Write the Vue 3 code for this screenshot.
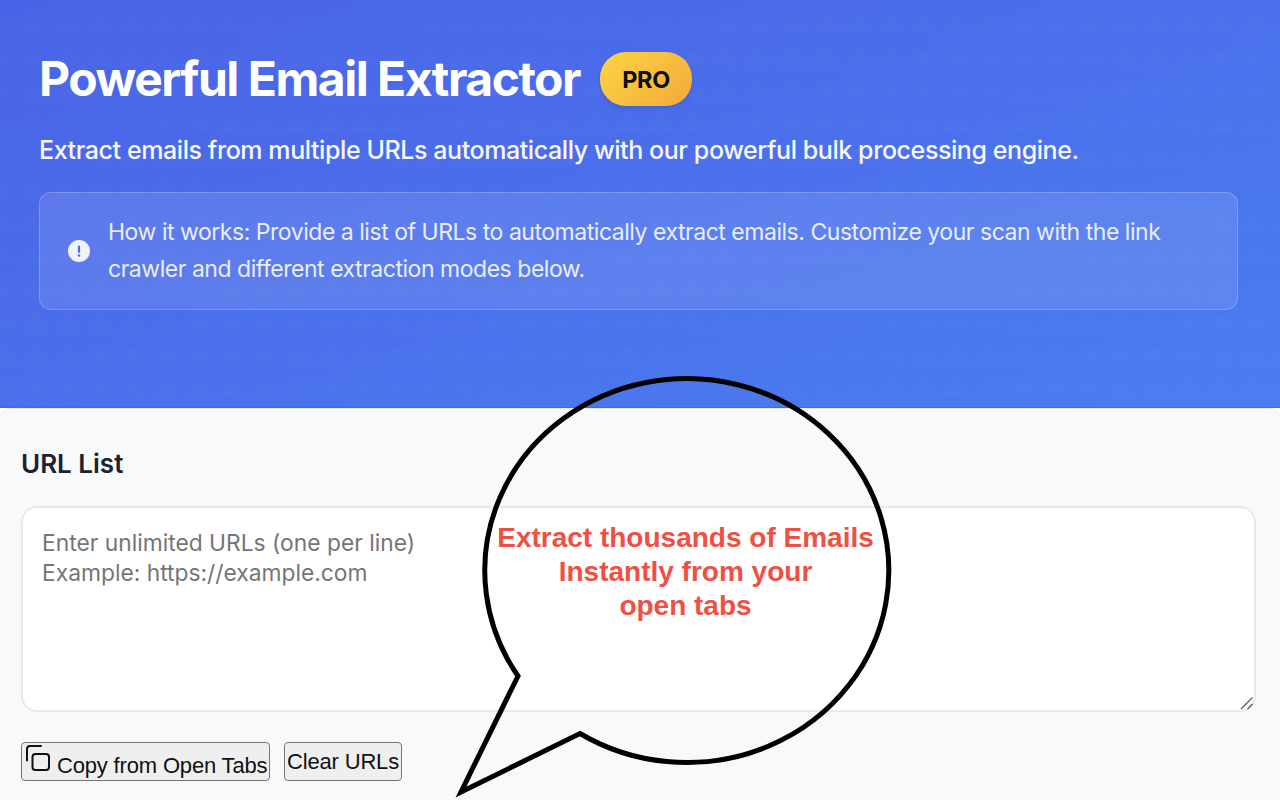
<script setup>
const title = 'Powerful Email Extractor'
const subtitle = 'Extract emails from multiple URLs automatically with our powerful bulk processing engine.'
const info = 'How it works: Provide a list of URLs to automatically extract emails. Customize your scan with the link crawler and different extraction modes below.'
const placeholder = 'Enter unlimited URLs (one per line)\nExample: https://example.com'
</script>

<template>
  <div class="page">
    <header class="hero">
      <div class="title-row">
        <h1>{{ title }}</h1>
        <span class="badge">PRO</span>
      </div>
      <p class="subtitle">{{ subtitle }}</p>
      <div class="info">
        <svg class="info-icon" viewBox="0 0 24 24" width="22" height="22">
          <circle cx="12" cy="12" r="12" fill="#f1f4fe" />
          <rect x="10.800" y="6" width="2.400" height="8" rx="1" fill="#4f6ce6" />
          <circle cx="12" cy="17" r="1.400" fill="#4f6ce6" />
        </svg>
        <p>{{ info }}</p>
      </div>
    </header>
    <main class="panel">
      <h2>URL List</h2>
      <div class="field">
        <textarea class="urls" :placeholder="placeholder"></textarea>
        <svg class="grip" viewBox="0 0 14 14" width="14" height="14" fill="none" stroke="#555" stroke-width="1.100">
          <path d="M1 13 12.500 1.500M7.500 13 12.500 8" />
        </svg>
      </div>
      <div class="actions">
        <button class="copy" type="button">
          <svg viewBox="0 0 26 26" width="26" height="26" fill="none" stroke="#111" stroke-width="2" stroke-linecap="round" stroke-linejoin="round">
            <rect x="7.500" y="9" width="16.500" height="16" rx="3" />
            <path d="M2 15.500V4a3 3 0 0 1 3-3h11" />
          </svg>
          <span>Copy from Open Tabs</span>
        </button>
        <button class="clear" type="button">Clear URLs</button>
      </div>
    </main>
    <div class="callout">
      <svg viewBox="0 0 1280 800" width="1280" height="800" fill="none">
        <path d="M518 676 A202 192 0 1 1 580 733.500 L461 792 Z" stroke="#000" stroke-width="5" stroke-linejoin="miter" stroke-miterlimit="10" />
      </svg>
      <p class="callout-text">Extract thousands of Emails<br />Instantly from your<br />open tabs</p>
    </div>
  </div>
</template>

<style>
html, body { margin: 0; background: #fff; }
</style>

<style scoped>
.page {
  position: relative;
  width: 1280px;
  height: 800px;
  overflow: hidden;
  background: #fff;
  font-family: Inter, "Liberation Sans", sans-serif;
}
.hero {
  box-sizing: border-box;
  height: 408px;
  padding: 52px 42px 0 39px;
  color: #fff;
  background-color: #4a6fec;
  background-image:
    linear-gradient(45deg, rgba(255,255,255,.012) 25%, transparent 25%),
    linear-gradient(315deg, rgba(255,255,255,.012) 25%, transparent 25%),
    linear-gradient(160deg, #4a63e6 0%, #4a7df0 100%);
  background-size: 33px 33px, 33px 33px, 100% 100%;
  border-bottom: 1px solid #3a6bf2;
}
.title-row {
  display: flex;
  align-items: center;
  gap: 20px;
  height: 54px;
}
h1 {
  margin: 0;
  font-size: 48px;
  line-height: 54px;
  font-weight: 700;
  letter-spacing: -1.480px;
}
.badge {
  box-sizing: border-box;
  width: 92px;
  height: 54px;
  border-radius: 26px;
  display: flex;
  align-items: center;
  justify-content: center;
  background: linear-gradient(135deg, #fbd544, #f4a93a);
  box-shadow: 0 2px 5px rgba(0,0,0,.12);
  color: #0d0d0d;
  font-size: 23.400px;
  font-weight: 700;
  letter-spacing: -0.2px;
}
.subtitle {
  margin: 26px 0 0;
  font-size: 25px;
  line-height: 36px;
  font-weight: 500;
  letter-spacing: -0.42px;
  color: #f7f8fe;
  white-space: nowrap;
}
.info {
  box-sizing: border-box;
  margin-top: 24px;
  width: 1199px;
  height: 118px;
  padding: 0 20px 0 28px;
  display: flex;
  align-items: center;
  gap: 18px;
  background: rgba(255,255,255,.1);
  border: 1px solid rgba(255,255,255,.2);
  border-radius: 12px;
}
.info-icon { flex: none; }
.info p {
  margin: 0;
  font-size: 23px;
  line-height: 37.500px;
  letter-spacing: -0.47px;
  color: #e9edfc;
}
.panel {
  box-sizing: border-box;
  height: 392px;
  padding: 37px 24px 0 21px;
  background: #f8f9fb;
  border-top: 1px solid #e5e7eb;
  border-radius: 12px 12px 0 0;
}
h2 {
  margin: 0;
  font-size: 26px;
  line-height: 36px;
  font-weight: 600;
  color: #1a2230;
}
.field {
  position: relative;
  width: 1235px;
  margin-top: 24px;
}
.grip {
  position: absolute;
  right: 2px;
  bottom: 2px;
  pointer-events: none;
}
.urls {
  display: block;
  box-sizing: border-box;
  width: 100%;
  height: 206px;
  padding: 20px 19px;
  border: 2px solid #e7e9ee;
  border-radius: 16px;
  background: #fff;
  outline: none;
  resize: none;
  font-family: Inter, "Liberation Sans", sans-serif;
  font-size: 22.800px;
  line-height: 30px;
}
.urls::placeholder { color: #757575; opacity: 1; }
.actions {
  display: flex;
  align-items: flex-start;
  gap: 14px;
  margin-top: 30px;
}
button {
  box-sizing: border-box;
  height: 39px;
  margin: 0;
  background: #efefef;
  border: 1.500px solid #767676;
  border-radius: 4px;
  color: #111;
  font-family: "Liberation Sans", Arial, sans-serif;
  font-size: 22px;
  letter-spacing: -0.17px;
  white-space: nowrap;
}
.copy {
  width: 249px;
  padding: 0 1px 0 3px;
  display: flex;
  align-items: center;
  gap: 6px;
}
.copy svg { flex: none; margin-top: -7px; }
.copy span { padding-top: 8px; }
.clear { width: 118px; padding: 0 2px; }
.callout {
  position: absolute;
  inset: 0;
  pointer-events: none;
}
.callout svg { display: block; }
.callout-text {
  position: absolute;
  left: 485.500px;
  top: 521px;
  width: 400px;
  margin: 0;
  text-align: center;
  font-family: "Liberation Sans", Arial, sans-serif;
  font-weight: 700;
  font-size: 28px;
  line-height: 34px;
  color: #ee5044;
}
</style>
